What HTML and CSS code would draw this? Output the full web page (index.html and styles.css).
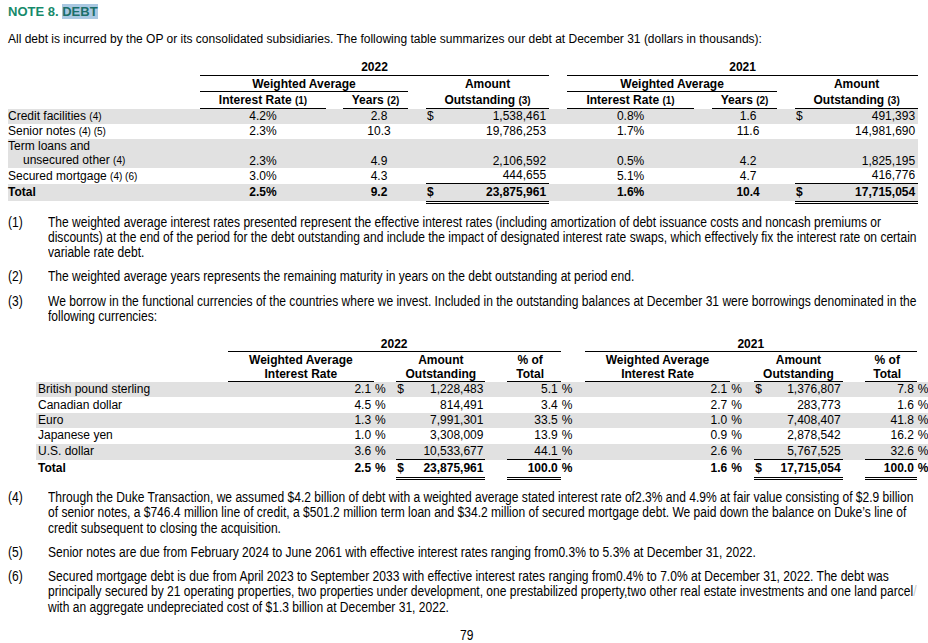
FILE: index.html
```html
<!DOCTYPE html>
<html>
<head>
<meta charset="utf-8">
<title>Note 8. Debt</title>
<link rel="stylesheet" href="styles.css">
</head>
<body>
<div class="page">
  <h1 class="title">NOTE 8. <span class="hl">DEBT</span></h1>
  <p class="intro">All debt is incurred by the OP or its consolidated subsidiaries. The following table summarizes our debt at December 31 (dollars in thousands):</p>

  <table class="t1">
    <colgroup>
      <col class="a-lab"><col class="a-ir"><col class="a-g17"><col class="a-yr"><col class="a-g18"><col class="a-dol"><col class="a-amt">
      <col class="a-g18"><col class="a-ir2"><col class="a-g18"><col class="a-yr"><col class="a-g18"><col class="a-dol"><col class="a-amt2">
    </colgroup>
    <tr class="hr1">
      <td></td>
      <td colspan="6" class="hd ul">2022</td>
      <td></td>
      <td colspan="6" class="hd ul">2021</td>
    </tr>
    <tr class="hr2">
      <td></td>
      <td colspan="3" class="hd ul">Weighted Average</td>
      <td></td>
      <td colspan="2" class="hd">Amount</td>
      <td></td>
      <td colspan="3" class="hd ul">Weighted Average</td>
      <td></td>
      <td colspan="2" class="hd">Amount</td>
    </tr>
    <tr class="hr3">
      <td></td>
      <td class="hd ul">Interest Rate <span class="ref">(1)</span></td>
      <td></td>
      <td class="hd ul">Years <span class="ref">(2)</span></td>
      <td></td>
      <td colspan="2" class="hd ul">Outstanding <span class="ref">(3)</span></td>
      <td></td>
      <td class="hd ul">Interest Rate <span class="ref">(1)</span></td>
      <td></td>
      <td class="hd ul">Years <span class="ref">(2)</span></td>
      <td></td>
      <td colspan="2" class="hd ul">Outstanding <span class="ref">(3)</span></td>
    </tr>
    <tr class="sh">
      <td class="lab">Credit facilities <span class="ref">(4)</span></td>
      <td class="ctr">4.2%</td><td></td><td class="yr">2.8</td><td></td>
      <td class="dol">$</td><td class="num">1,538,461</td><td></td>
      <td class="ctr">0.8%</td><td></td><td class="yr">1.6</td><td></td>
      <td class="dol">$</td><td class="num">491,393</td>
    </tr>
    <tr>
      <td class="lab">Senior notes <span class="ref">(4) (5)</span></td>
      <td class="ctr">2.3%</td><td></td><td class="yr">10.3</td><td></td>
      <td></td><td class="num">19,786,253</td><td></td>
      <td class="ctr">1.7%</td><td></td><td class="yr">11.6</td><td></td>
      <td></td><td class="num">14,981,690</td>
    </tr>
    <tr class="sh two">
      <td class="lab">Term loans and<br><span class="ind">unsecured other <span class="ref">(4)</span></span></td>
      <td class="ctr bot">2.3%</td><td></td><td class="yr bot">4.9</td><td></td>
      <td></td><td class="num bot">2,106,592</td><td></td>
      <td class="ctr bot">0.5%</td><td></td><td class="yr bot">4.2</td><td></td>
      <td></td><td class="num bot">1,825,195</td>
    </tr>
    <tr>
      <td class="lab">Secured mortgage <span class="ref">(4) (6)</span></td>
      <td class="ctr">3.0%</td><td></td><td class="yr">4.3</td><td></td>
      <td class="ul"></td><td class="num ul">444,655</td><td></td>
      <td class="ctr">5.1%</td><td></td><td class="yr">4.7</td><td></td>
      <td class="ul"></td><td class="num ul">416,776</td>
    </tr>
    <tr class="sh tot">
      <td class="lab">Total</td>
      <td class="ctr">2.5%</td><td></td><td class="yr">9.2</td><td></td>
      <td class="dol">$</td><td class="num">23,875,961</td><td></td>
      <td class="ctr">1.6%</td><td></td><td class="yr">10.4</td><td></td>
      <td class="dol">$</td><td class="num">17,715,054</td>
    </tr>
    <tr class="dbl">
      <td></td><td></td><td></td><td></td><td></td>
      <td class="dl"></td><td class="dl"></td><td></td>
      <td></td><td></td><td></td><td></td>
      <td class="dl"></td><td class="dl"></td>
    </tr>
  </table>

  <div class="fn first">
    <div class="fn-n">(1)</div>
    <div class="fn-t">The weighted average interest rates presented represent the effective interest rates (including amortization of debt issuance costs and noncash premiums or<br>discounts) at the end of the period for the debt outstanding and include the impact of designated interest rate swaps, which effectively fix the interest rate on certain<br>variable rate debt.</div>
  </div>
  <div class="fn">
    <div class="fn-n">(2)</div>
    <div class="fn-t">The weighted average years represents the remaining maturity in years on the debt outstanding at period end.</div>
  </div>
  <div class="fn">
    <div class="fn-n">(3)</div>
    <div class="fn-t">We borrow in the functional currencies of the countries where we invest. Included in the outstanding balances at December 31 were borrowings denominated in the<br>following currencies:</div>
  </div>

  <table class="t2">
    <colgroup>
      <col class="b-lab"><col class="b-wa"><col class="b-pc"><col class="b-g11"><col class="b-dol"><col class="b-amt"><col class="b-g21"><col class="b-tot"><col class="b-pc">
      <col class="b-g13"><col class="b-wa2"><col class="b-pc2"><col class="b-g12"><col class="b-dol"><col class="b-amt2"><col class="b-g22"><col class="b-tot2"><col class="b-pc">
    </colgroup>
    <tr class="hr1">
      <td></td>
      <td colspan="7" class="hd ul">2022</td>
      <td></td><td></td>
      <td colspan="7" class="hd ul">2021</td>
      <td></td>
    </tr>
    <tr class="hr2b">
      <td></td>
      <td class="hd ul">Weighted Average<br>Interest Rate</td>
      <td></td><td></td>
      <td colspan="2" class="hd ul">Amount<br>Outstanding</td>
      <td></td>
      <td class="hd ul pct-h">% of<br>Total</td>
      <td></td><td></td>
      <td class="hd ul">Weighted Average<br>Interest Rate</td>
      <td></td><td></td>
      <td colspan="2" class="hd ul">Amount<br>Outstanding</td>
      <td></td>
      <td class="hd ul pct-h">% of<br>Total</td>
      <td></td>
    </tr>
    <tr class="sh">
      <td class="lab2">British pound sterling</td>
      <td class="rate">2.1</td><td class="pc">%</td><td></td>
      <td class="dol">$</td><td class="num2">1,228,483</td><td></td>
      <td class="rate">5.1</td><td class="pc">%</td><td></td>
      <td class="rate">2.1</td><td class="pc">%</td><td></td>
      <td class="dol">$</td><td class="num2">1,376,807</td><td></td>
      <td class="rate">7.8</td><td class="pc">%</td>
    </tr>
    <tr>
      <td class="lab2">Canadian dollar</td>
      <td class="rate">4.5</td><td class="pc">%</td><td></td>
      <td></td><td class="num2">814,491</td><td></td>
      <td class="rate">3.4</td><td class="pc">%</td><td></td>
      <td class="rate">2.7</td><td class="pc">%</td><td></td>
      <td></td><td class="num2">283,773</td><td></td>
      <td class="rate">1.6</td><td class="pc">%</td>
    </tr>
    <tr class="sh">
      <td class="lab2">Euro</td>
      <td class="rate">1.3</td><td class="pc">%</td><td></td>
      <td></td><td class="num2">7,991,301</td><td></td>
      <td class="rate">33.5</td><td class="pc">%</td><td></td>
      <td class="rate">1.0</td><td class="pc">%</td><td></td>
      <td></td><td class="num2">7,408,407</td><td></td>
      <td class="rate">41.8</td><td class="pc">%</td>
    </tr>
    <tr>
      <td class="lab2">Japanese yen</td>
      <td class="rate">1.0</td><td class="pc">%</td><td></td>
      <td></td><td class="num2">3,308,009</td><td></td>
      <td class="rate">13.9</td><td class="pc">%</td><td></td>
      <td class="rate">0.9</td><td class="pc">%</td><td></td>
      <td></td><td class="num2">2,878,542</td><td></td>
      <td class="rate">16.2</td><td class="pc">%</td>
    </tr>
    <tr class="sh">
      <td class="lab2">U.S. dollar</td>
      <td class="rate">3.6</td><td class="pc">%</td><td></td>
      <td class="ul"></td><td class="num2 ul">10,533,677</td><td></td>
      <td class="rate ul">44.1</td><td class="pc">%</td><td></td>
      <td class="rate">2.6</td><td class="pc">%</td><td></td>
      <td class="ul"></td><td class="num2 ul">5,767,525</td><td></td>
      <td class="rate ul">32.6</td><td class="pc">%</td>
    </tr>
    <tr class="tot">
      <td class="lab2">Total</td>
      <td class="rate">2.5</td><td class="pc">%</td><td></td>
      <td class="dol">$</td><td class="num2">23,875,961</td><td></td>
      <td class="rate">100.0</td><td class="pc">%</td><td></td>
      <td class="rate">1.6</td><td class="pc">%</td><td></td>
      <td class="dol">$</td><td class="num2">17,715,054</td><td></td>
      <td class="rate">100.0</td><td class="pc">%</td>
    </tr>
    <tr class="dbl">
      <td></td><td></td><td></td><td></td>
      <td class="dl"></td><td class="dl"></td><td></td>
      <td class="dl"></td><td></td><td></td>
      <td></td><td></td><td></td>
      <td class="dl"></td><td class="dl"></td><td></td>
      <td class="dl"></td><td></td>
    </tr>
  </table>

  <div class="fn first2">
    <div class="fn-n">(4)</div>
    <div class="fn-t">Through the Duke Transaction, we assumed $4.2 billion of debt with a weighted average stated interest rate of2.3% and 4.9% at fair value consisting of $2.9 billion<br>of senior notes, a $746.4 million line of credit, a $501.2 million term loan and $34.2 million of secured mortgage debt. We paid down the balance on Duke’s line of<br>credit subsequent to closing the acquisition.</div>
  </div>
  <div class="fn">
    <div class="fn-n">(5)</div>
    <div class="fn-t">Senior notes are due from February 2024 to June 2061 with effective interest rates ranging from0.3% to 5.3% at December 31, 2022.</div>
  </div>
  <div class="fn">
    <div class="fn-n">(6)</div>
    <div class="fn-t">Secured mortgage debt is due from April 2023 to September 2033 with effective interest rates ranging from0.4% to 7.0% at December 31, 2022. The debt was<br>principally secured by 21 operating properties, two properties under development, one prestabilized property,two other real estate investments and one land parcel<span class="faint">/</span><br>with an aggregate undepreciated cost of $1.3 billion at December 31, 2022.</div>
  </div>

  <div class="pageno"><span class="pn">79</span></div>
</div>
</body>
</html>
```

FILE: styles.css
```css
* { box-sizing: border-box; }
html, body { margin: 0; padding: 0; background: #fff; }
body {
  font-family: "Liberation Sans", Arial, sans-serif;
  font-size: 12px;
  color: #000;
}
.page { width: 928px; padding: 4px 8px 0 8px; }

.title {
  margin: 0;
  font-size: 13px;
  line-height: 15px;
  font-weight: bold;
  color: #178a6b;
}
.hl { background: #a9c8e2; color: #1b6f6a; }

.intro { margin: 12.5px 0 0; line-height: 15px; }

table { border-collapse: separate; border-spacing: 0; table-layout: fixed; }
td { padding: 0; line-height: 15px; height: 15px; white-space: nowrap; vertical-align: middle; }

.hd { font-weight: bold; text-align: center; }
.ul { border-bottom: 1px solid #000; }
.ref { font-size: 10px; }
.sh td { background: #e1e1e1; background-clip: padding-box; }
.tot td { font-weight: bold; }
.dbl td { height: 4px; line-height: 0; }
.dl { border-top: 3px double #000; }

/* ---- table 1 ---- */
.t1 { margin-top: 13.5px; width: 910px; }
.a-lab { width: 192px; }
.a-ir { width: 126px; }
.a-ir2 { width: 127px; }
.a-g17 { width: 17px; }
.a-g18 { width: 18px; }
.a-yr { width: 65px; }
.a-dol { width: 16px; }
.a-amt { width: 107px; }
.a-amt2 { width: 107px; }

.t1 .hr1 td { height: 16px; line-height: 15px; }
.t1 .hr2 td { height: 16px; line-height: 14px; }
.t1 .hr3 td { height: 17px; line-height: 13px; vertical-align: bottom; padding-bottom: 1px; }
.lab { text-align: left; }
.ind { padding-left: 15px; }
.ctr { text-align: center; }
.yr { text-align: center; padding-left: 7px; }
.dol { text-align: left; padding-left: 1px; }
.num { text-align: right; padding-right: 3px; }
.two td { height: 28px; line-height: 14px; }
.bot { vertical-align: bottom; }
.t1 .tot td { height: 17px; line-height: 17px; }

/* ---- footnotes (narrow face emulated by horizontal compression) ---- */
.fn {
  display: flex;
  margin-top: 9px;
  font-size: 14px;
  line-height: 15.25px;
}
.fn.first { margin-top: 9.5px; }
.fn.first2 { margin-top: 9.5px; }
.fn-n { width: 40px; flex: none; transform: scaleX(0.86); transform-origin: 0 50%; }
.fn-t { white-space: nowrap; transform: scaleX(0.86); transform-origin: 0 50%; }
.faint { color: #c8c8c8; }

/* ---- table 2 ---- */
.t2 { margin-top: 13px; margin-left: 28px; width: 892px; }
.b-lab { width: 191px; }
.b-wa { width: 146px; }
.b-wa2 { width: 145px; }
.b-pc { width: 11px; }
.b-pc2 { width: 12px; }
.b-g11 { width: 11px; }
.b-g12 { width: 12px; }
.b-g13 { width: 13px; }
.b-g21 { width: 21px; }
.b-g22 { width: 22px; }
.b-dol { width: 15px; }
.b-amt { width: 74px; }
.b-amt2 { width: 73px; }
.b-tot { width: 54px; }
.b-tot2 { width: 52px; }

.t2 tr td { height: 15.4px; }
.t2 .hr1 td { height: 15px; line-height: 14px; }
.t2 .hr2b td { height: 30px; line-height: 14px; vertical-align: bottom; }
.pct-h { padding-right: 7px; }
.lab2 { text-align: left; padding-left: 2px; }
.rate { text-align: right; padding-right: 3px; }
.pc { text-align: left; padding-left: 1px; }
.num2 { text-align: right; padding-right: 2px; }
.t2 .tot td { height: 17px; line-height: 17px; }
.t2 .dbl td { height: 4px; }

.pageno {
  margin-top: 12.75px;
  padding-left: 5px;
  text-align: center;
  font-size: 14px;
  line-height: 15px;
}
.pn { display: inline-block; transform: scaleX(0.86); }
```
